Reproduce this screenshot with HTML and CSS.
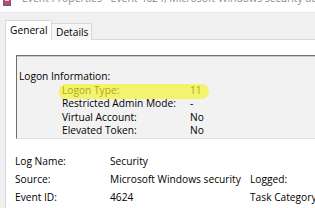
FILE: index.html
```html
<!DOCTYPE html>
<html>
<head>
<meta charset="utf-8">
<link rel="stylesheet" href="styles.css">
</head>
<body>
<div class="window">
  <div class="titlebar">
    <svg class="appicon" width="8" height="12" viewBox="0 0 8 12">
      <rect x="0" y="0" width="8" height="12" fill="#7a5a8a"/>
      <rect x="1" y="1" width="6" height="9" fill="#c94a5a"/>
      <rect x="2" y="2" width="4" height="5" fill="#e8d0d8"/>
    </svg>
    <span class="title">Event Properties - Event 4624, Microsoft Windows security auditing.</span>
  </div>
  <div class="tabs">
    <div class="tab active">General</div>
    <div class="tab">Details</div>
  </div>
  <div class="panel">
    <div class="textbox">
      <div class="line blank">&nbsp;</div>
      <div class="line">Logon Information:</div>
      <div class="line row marked"><span class="k">Logon Type:</span><span class="v">11</span></div>
      <div class="line row"><span class="k">Restricted Admin Mode:</span><span class="v">-</span></div>
      <div class="line row"><span class="k">Virtual Account:</span><span class="v">No</span></div>
      <div class="line row"><span class="k">Elevated Token:</span><span class="v">No</span></div>
    </div>
    <div class="meta">
      <span class="c1">Log Name:</span><span class="c2">Security</span><span class="c3"></span>
      <span class="c1">Source:</span><span class="c2">Microsoft Windows security</span><span class="c3">Logged:</span>
      <span class="c1">Event ID:</span><span class="c2">4624</span><span class="c3">Task Category</span>
    </div>
  </div>
</div>
</body>
</html>
```
FILE: styles.css
```css
html, body {
  margin: 0;
  padding: 0;
}
body {
  width: 315px;
  height: 208px;
  overflow: hidden;
  background: #f0f0f0;
  font-family: "Open Sans", "Noto Sans", sans-serif;
  font-size: 10.2px;
  color: #000;
}
.window {
  width: 315px;
  height: 208px;
  overflow: hidden;
}
.titlebar {
  height: 12px;
  background: #ffffff;
  display: flex;
  align-items: flex-start;
  overflow: hidden;
  white-space: nowrap;
  border-bottom: 1px solid #e8e8e8;
}
.appicon {
  margin-left: 3px;
  margin-top: -6px;
  flex: none;
}
.title {
  margin-left: 11px;
  margin-top: -9px;
  font-size: 10.4px;
  line-height: 14px;
  color: #8a8a8a;
}
.tabs {
  display: flex;
  align-items: flex-end;
  padding-left: 5px;
  margin-top: 7px;
  height: 20px;
  position: relative;
  z-index: 1;
}
.tab {
  box-sizing: border-box;
  border: 1px solid #d9d9d9;
  border-bottom: none;
  white-space: nowrap;
}
.tab.active {
  height: 20px;
  width: 47px;
  background: #ffffff;
  padding-left: 4px;
  line-height: 18px;
}
.tab:not(.active) {
  height: 17px;
  width: 40px;
  border-left: none;
  background: #f6f6f6;
  padding-left: 4px;
  line-height: 17px;
}
.panel {
  margin-left: 5px;
  margin-top: -1px;
  border-left: 1px solid #d9d9d9;
  border-top: 1px solid #d9d9d9;
  background: #ffffff;
  height: 200px;
  padding-top: 15px;
  padding-left: 10px;
  box-sizing: border-box;
}
.textbox {
  height: 84px;
  box-sizing: border-box;
  background: #f2f2f2;
  border-top: 1px solid #6e6e6e;
  border-left: 1px solid #6e6e6e;
  border-bottom: 1px solid #e0e0e0;
  box-shadow: inset 0 1px 0 #c8c8c8;
  padding-top: 1px;
  padding-left: 2px;
  overflow: hidden;
  white-space: nowrap;
}
.line {
  line-height: 13.4px;
  height: 13.4px;
}
.row {
  display: flex;
  position: relative;
  padding-left: 43px;
}
.row .k {
  width: 128px;
  flex: none;
  position: relative;
}
.row .v {
  position: relative;
}
.marked::before {
  content: "";
  position: absolute;
  left: 40px;
  width: 150px;
  top: 0px;
  height: 15px;
  background: #f4f36c;
  border-radius: 8px 9px 9px 7px;
}
.marked .k, .marked .v {
  color: #b0a818;
}
.meta {
  display: grid;
  grid-template-columns: 95px 140px 1fr;
  grid-auto-rows: 18px;
  line-height: 18px;
  margin-top: 13px;
  margin-left: -1px;
  width: 310px;
}
.meta span {
  white-space: nowrap;
}
```
